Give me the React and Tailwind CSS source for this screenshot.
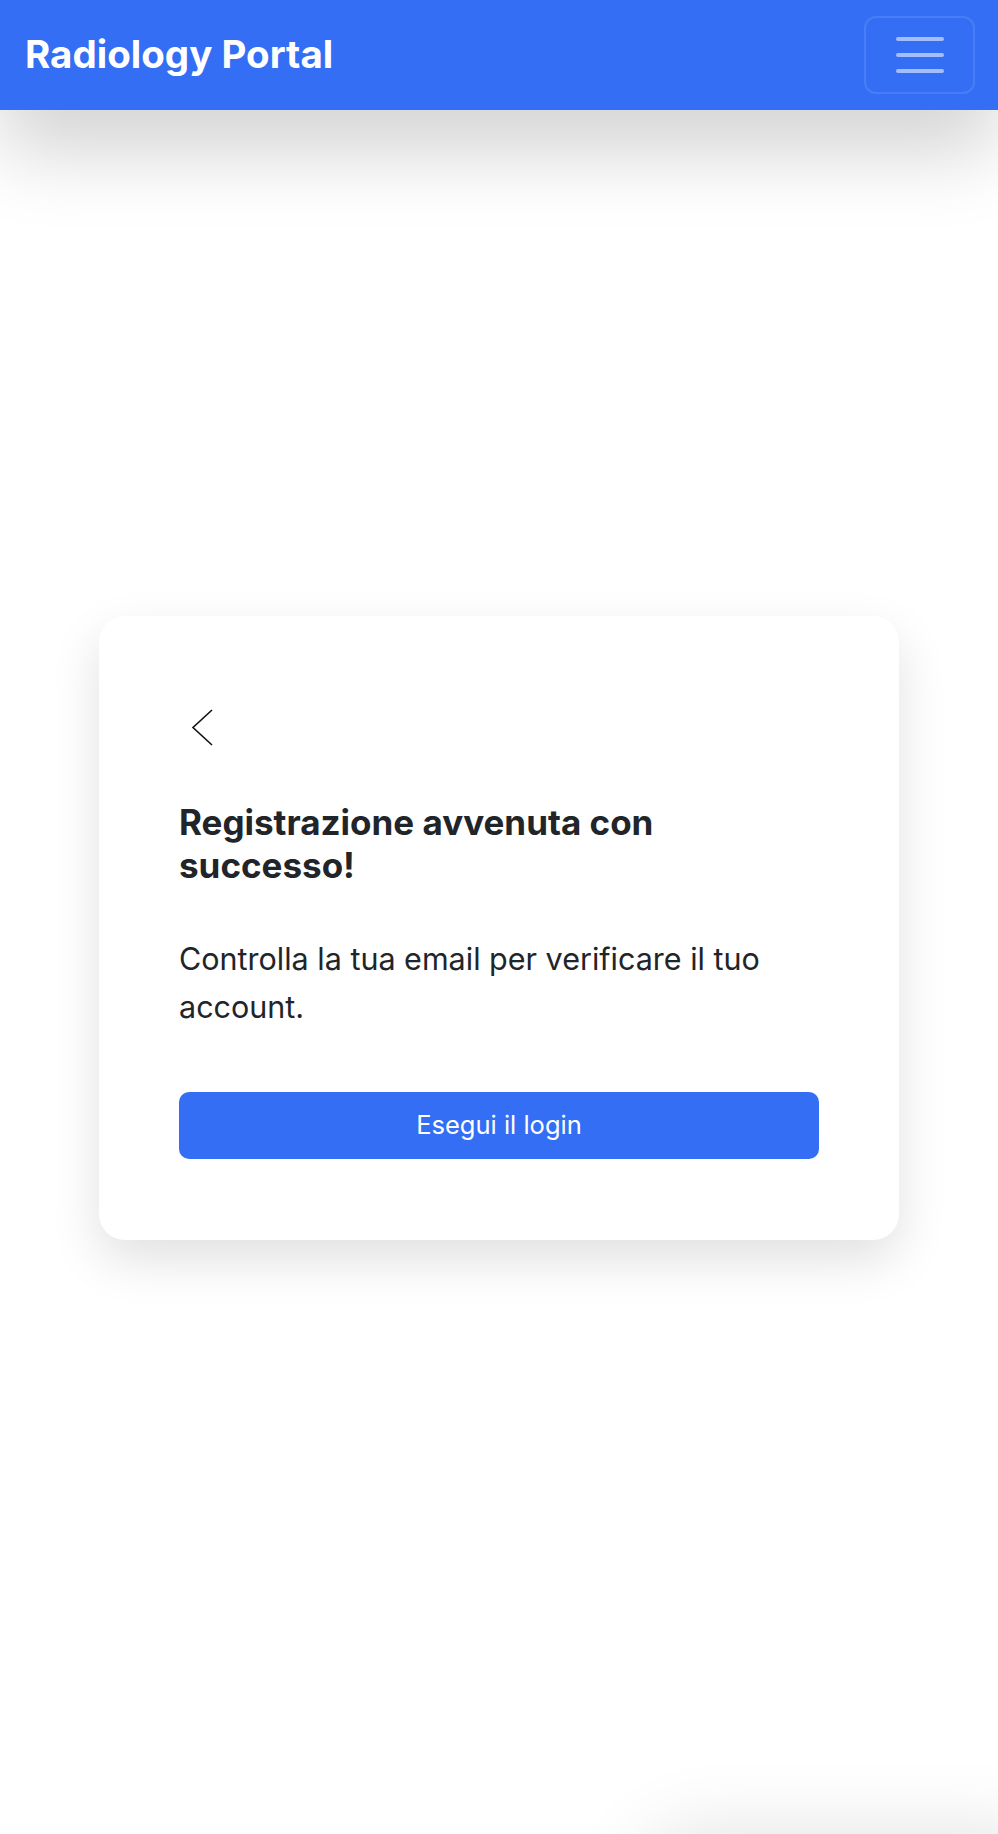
import React from 'react';

export default function App() {
  return (
    <div
      className="relative min-h-[1834px] bg-white overflow-hidden text-[#212529]"
      style={{ fontFamily: 'Inter, "Noto Sans", sans-serif' }}
    >
      {/* Navbar */}
      <header className="relative z-10 h-[110px] bg-[#336ef5] flex items-center justify-between pl-[25px] pr-[23px] shadow-[0_40px_80px_rgba(0,0,0,0.18)]">
        <h1 className="text-[38.5px] font-bold text-white">Radiology Portal</h1>
        <button className="w-[111px] h-[78px] rounded-[12px] border-2 border-white/10 flex flex-col items-center justify-center gap-[12px]">
          <span className="block w-[48px] h-[4px] rounded-full bg-white/55" />
          <span className="block w-[48px] h-[4px] rounded-full bg-white/55" />
          <span className="block w-[48px] h-[4px] rounded-full bg-white/55" />
        </button>
      </header>

      {/* Content */}
      <main className="flex justify-center pt-[506px]">
        <div className="w-[800px] bg-white rounded-[26px] shadow-[0_20px_50px_rgba(0,0,0,0.12)] px-[80px] pt-[93px] pb-[81px]">
          <button className="block ml-[12px] h-[37px] w-[22px]">
            <svg width="22" height="37" viewBox="0 0 22 37" fill="none">
              <path d="M21 1 L2 18.5 L21 36" stroke="#111" strokeWidth="1.6" />
            </svg>
          </button>

          <h2 className="mt-[55px] text-[35px] leading-[43px] font-bold">
            Registrazione avvenuta con successo!
          </h2>

          <p className="mt-[48px] text-[30.5px] leading-[48px]">
            Controlla la tua email per verificare il tuo account.
          </p>

          <button className="mt-[61px] w-full h-[67px] rounded-[10px] bg-[#336ef5] text-white text-[25.5px]">
            Esegui il login
          </button>
        </div>
      </main>

      {/* Partial floating element shadow at bottom right */}
      <div className="absolute right-[-60px] bottom-[-120px] w-[420px] h-[120px] rounded-full shadow-[0_0_80px_rgba(0,0,0,0.12)]" />
    </div>
  );
}
